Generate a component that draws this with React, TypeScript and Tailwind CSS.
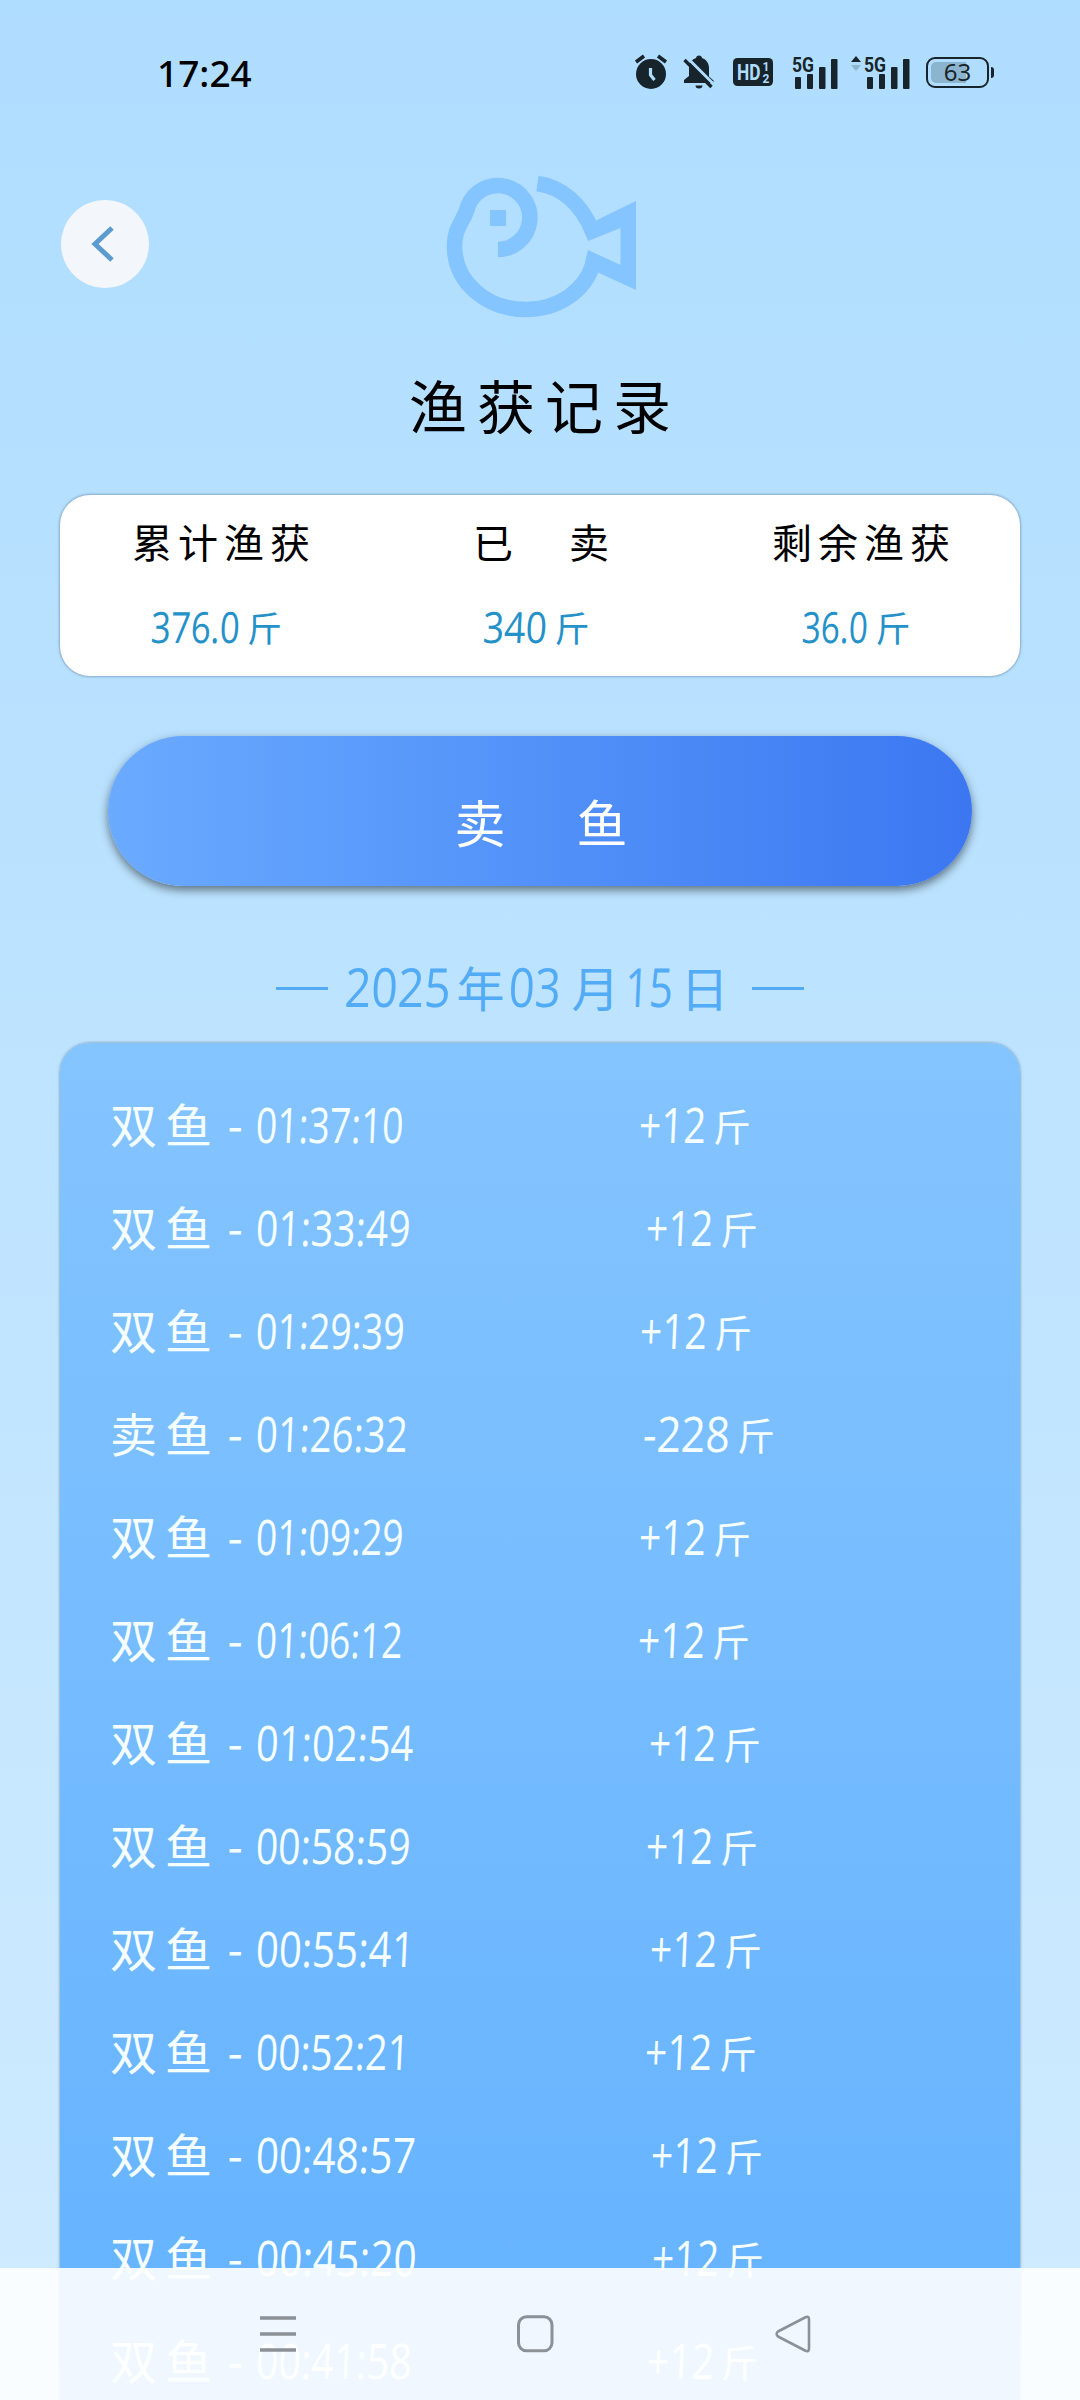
import type { ReactNode } from 'react';

type CatchRecord = {
  type: string;
  time: string;
  timeWidth: number;
  amount: string;
};

const records: CatchRecord[] = [
  { type: '双鱼', time: '01:37:10', timeWidth: 148, amount: '+12' },
  { type: '双鱼', time: '01:33:49', timeWidth: 155, amount: '+12' },
  { type: '双鱼', time: '01:29:39', timeWidth: 149, amount: '+12' },
  { type: '卖鱼', time: '01:26:32', timeWidth: 152, amount: '-228' },
  { type: '双鱼', time: '01:09:29', timeWidth: 148, amount: '+12' },
  { type: '双鱼', time: '01:06:12', timeWidth: 147, amount: '+12' },
  { type: '双鱼', time: '01:02:54', timeWidth: 158, amount: '+12' },
  { type: '双鱼', time: '00:58:59', timeWidth: 155, amount: '+12' },
  { type: '双鱼', time: '00:55:41', timeWidth: 159, amount: '+12' },
  { type: '双鱼', time: '00:52:21', timeWidth: 154, amount: '+12' },
  { type: '双鱼', time: '00:48:57', timeWidth: 160, amount: '+12' },
  { type: '双鱼', time: '00:45:20', timeWidth: 161, amount: '+12' },
  { type: '双鱼', time: '00:41:58', timeWidth: 156, amount: '+12' },
];

// advance widths of the digit font, in em
const advance = (text: string) =>
  [...text].reduce((sum, c) => sum + (c === ':' || c === '.' ? 0.266 : c === '-' ? 0.322 : 0.572), 0);

function Narrow({ text, size, width }: { text: string; size: number; width: number }) {
  return (
    <span className="inline-block shrink-0 whitespace-nowrap font-['Open_Sans','Noto_Sans',sans-serif] font-normal" style={{ width, fontSize: size }}>
      <span
        className="inline-block origin-left"
        style={{ transform: `scaleX(${width / (advance(text) * size)}) skewX(-3deg)` }}
      >
        {text}
      </span>
    </span>
  );
}

function SignalBars() {
  return (
    <svg width="46" height="36" viewBox="0 -2 46 36" fill="#18242b">
      <text x="0" y="15.500" fontSize="21" fontWeight="700" textLength="22" lengthAdjust="spacingAndGlyphs" fontFamily="Roboto, sans-serif">5G</text>
      <rect x="3" y="21" width="6" height="12" rx="1" />
      <rect x="15" y="18" width="6" height="15" rx="1" />
      <rect x="27" y="11" width="6.500" height="22" rx="1" />
      <rect x="39" y="3" width="6.500" height="30" rx="1" />
    </svg>
  );
}

function StatusBar() {
  return (
    <div className="flex h-[144px] items-center justify-between pr-[86px] pl-[157px] text-[#18242b]">
      <span className="font-['Noto_Sans',sans-serif] text-[37px] leading-none font-medium text-black">17:24</span>
      <div className="flex items-center">
        <svg width="34" height="36" viewBox="0 0 34 36" fill="none">
          <circle cx="17" cy="20" r="15" fill="#18242b" />
          <path d="M2 8l8-6M32 8l-8-6" stroke="#18242b" strokeWidth="3.600" />
          <path d="M16.500 14v7l4 5" stroke="#afddff" strokeWidth="3.200" />
        </svg>
        <svg className="ml-[14px]" width="34" height="36" viewBox="0 0 34 36">
          <path d="M17 1.500c1.800 0 2.800 1 3 2.500 4.600 1.500 7 5.500 7 10v8.500l4.500 4V29H2v-3l5-4v-8c0-4.500 2.500-8.500 7-10 .3-1.500 1.200-2.500 3-2.500z" fill="#18242b" />
          <path d="M13.500 31.500h7a3.500 3 0 0 1-7 0z" fill="#18242b" />
          <path d="M4 2.500l28 28" stroke="#afddff" strokeWidth="3" />
          <path d="M2.500 6l27 27" stroke="#18242b" strokeWidth="3.400" />
        </svg>
        <svg className="ml-[17px]" width="40" height="28" viewBox="0 0 40 28" fontFamily="Roboto, sans-serif" fontWeight="700" fill="#afddff">
          <rect width="40" height="28" rx="4.500" fill="#18242b" />
          <text x="4" y="22" fontSize="22" textLength="23.500" lengthAdjust="spacingAndGlyphs">HD</text>
          <text x="29.500" y="12.500" fontSize="12">1</text>
          <text x="29.500" y="25" fontSize="12">2</text>
        </svg>
        <div className="ml-[19px]"><SignalBars /></div>
        <svg className="ml-[12px]" width="12" height="34" viewBox="0 0 12 34">
          <path d="M1 7l5-6 5 6z" fill="#18242b" />
          <path d="M1 10l5 6 5-6z" fill="#8bb5cf" />
        </svg>
        <div className="ml-[2px]"><SignalBars /></div>
        <div className="ml-[16px] flex items-center gap-[2px]">
          <div className="relative flex h-[31px] w-[63px] items-center justify-center rounded-[9px] border-2 border-[#18242b]">
            <div className="absolute top-[3px] left-[3px] h-[21px] w-[35px] rounded-l-[5px] bg-[#8bb5cf]" />
            <span className="relative font-['Noto_Sans',sans-serif] text-[24px] leading-none">63</span>
          </div>
          <div className="h-[11px] w-[3px] rounded-r bg-[#18242b]" />
        </div>
      </div>
    </div>
  );
}

function FishLogo() {
  return (
    <svg width="220" height="170" viewBox="0 0 220 170" fill="none">
      <path
        d="M68 89.500A32 32 0 1 0 38 46C34 62 24.500 66 24.500 86C24.500 122 56 149.500 96 149.500C128 149.500 155 131 163 104M107.500 23.500C132 27 151 44 162.500 71"
        stroke="#84c4ff"
        strokeWidth="15.600"
      />
      <path d="M167 60l39-19v89l-39-18-12-10 3-12 32.500 15V68L158 81l-4-10z" fill="#84c4ff" />
      <path d="M60 50h16v16H60z" fill="#84c4ff" />
    </svg>
  );
}

function Stat({ label, children }: { label: ReactNode; children: ReactNode }) {
  return (
    <div className="flex flex-1 flex-col items-center gap-[25px]">
      <div className="flex h-[60px] items-center pl-[8px] text-[40px] tracking-[6px] text-black">{label}</div>
      <div className="flex h-[60px] items-center gap-[7px] pr-[7px] text-[35px] leading-none text-[#2491c8]">{children}</div>
    </div>
  );
}

function RecordRow({ record }: { record: CatchRecord }) {
  return (
    <li className="flex h-[103px] items-center pl-[50px] text-[47px] leading-none text-[#f5ffff]">
      <span className="-mt-[4px] w-[118px] shrink-0 tracking-[8px]">{record.type}</span>
      <Narrow text="-" size={49} width={15} />
      <span className="w-[13px] shrink-0" />
      <Narrow text={record.time} size={49} width={record.timeWidth} />
      <span className="w-[235px] shrink-0" />
      <Narrow text={record.amount} size={49} width={record.amount === '-228' ? 87 : 67} />
      <span className="pl-[7px] text-[38px]">斤</span>
    </li>
  );
}

function NavBar() {
  return (
    <div className="absolute inset-x-0 bottom-0 flex h-[132px] items-center bg-white/90 pl-[259px]">
      <svg width="38" height="38" viewBox="0 0 38 38" stroke="#8b9197" strokeWidth="3.500">
        <path d="M1 3h36M1 19h36M1 35h36" />
      </svg>
      <svg className="ml-[219px]" width="38" height="42" viewBox="0 -2 38 42" fill="none" stroke="#8b9197" strokeWidth="3">
        <rect x="2.500" y="1.800" width="33.500" height="34" rx="8" />
      </svg>
      <svg className="ml-[221px]" width="38" height="38" viewBox="0 0 38 38" fill="none" stroke="#8b9197" strokeWidth="2.600" strokeLinejoin="round">
        <path d="M30 2.500L3 16.500a3 3 0 0 0 0 5L30 35.500q4 2 4-2V4.500q0-4-4-2z" />
      </svg>
    </div>
  );
}

export default function App() {
  return (
    <div className="relative h-[2400px] w-[1080px] overflow-hidden bg-linear-to-b from-[#afddff] to-[#cfebff] font-['Noto_Sans_CJK_SC',sans-serif] font-normal">
      <StatusBar />

      <header className="flex h-[186px] items-start pt-4 pl-[61px]">
        <button className="mt-[40px] flex h-[88px] w-[88px] items-center justify-center rounded-full bg-[#f3f7fc]">
          <svg width="30" height="40" viewBox="0 0 30 40" fill="none">
            <path d="M22 4L5 20l17 16" stroke="#5b9bcd" strokeWidth="5" />
          </svg>
        </button>
        <div className="ml-[281px]">
          <FishLogo />
        </div>
      </header>

      <h1 className="mt-[34px] h-[80px] pl-[10px] text-center text-[58px] leading-[80px] tracking-[10px] text-black">渔获记录</h1>

      <section className="mx-[60px] mt-[51px] flex h-[181px] rounded-[30px] bg-white pt-[16px] shadow-[0_0_3px_rgba(60,90,120,0.8)]">
        <Stat label="累计渔获">
          <Narrow text="376.0" size={43} width={89} />
          <span>斤</span>
        </Stat>
        <Stat
          label={
            <span className="flex gap-[50px]">
              <span>已</span>
              <span>卖</span>
            </span>
          }
        >
          <Narrow text="340" size={43} width={64} />
          <span>斤</span>
        </Stat>
        <Stat label="剩余渔获">
          <Narrow text="36.0" size={43} width={66} />
          <span>斤</span>
        </Stat>
      </section>

      <button className="mx-[108px] mt-[60px] flex h-[150px] w-[864px] items-center justify-center gap-[71px] rounded-full bg-linear-to-r from-[#6aaaff] to-[#3c77f1] pt-[20px] pl-[2px] text-[51px] text-white shadow-[0_4px_10px_rgba(0,0,0,0.5)]">
        <span>卖</span>
        <span>鱼</span>
      </button>

      <div className="mt-[60px] flex h-[80px] items-center justify-center text-[48px] leading-none text-[#52abf5]">
        <span className="mt-[5px] mr-[17px] h-[3px] w-[52px] bg-[#52abf5]" />
        <Narrow text="2025" size={54} width={106} />
        <span className="mr-[5px] ml-[5px]">年</span>
        <Narrow text="03" size={54} width={52} />
        <span className="mr-[5px] ml-[10px]">月</span>
        <Narrow text="15" size={54} width={48} />
        <span className="ml-[8px]">日</span>
        <span className="mt-[5px] ml-[23px] h-[3px] w-[52px] bg-[#52abf5]" />
      </div>

      <ul className="mx-[60px] mt-[17px] h-[1420px] rounded-t-[30px] bg-linear-to-b from-[#84c4ff] to-[#62b1ff] pt-[30px] shadow-[0_0_3px_rgba(60,90,120,0.7)]">
        {records.map((record) => (
          <RecordRow key={record.time} record={record} />
        ))}
      </ul>

      <NavBar />
    </div>
  );
}
